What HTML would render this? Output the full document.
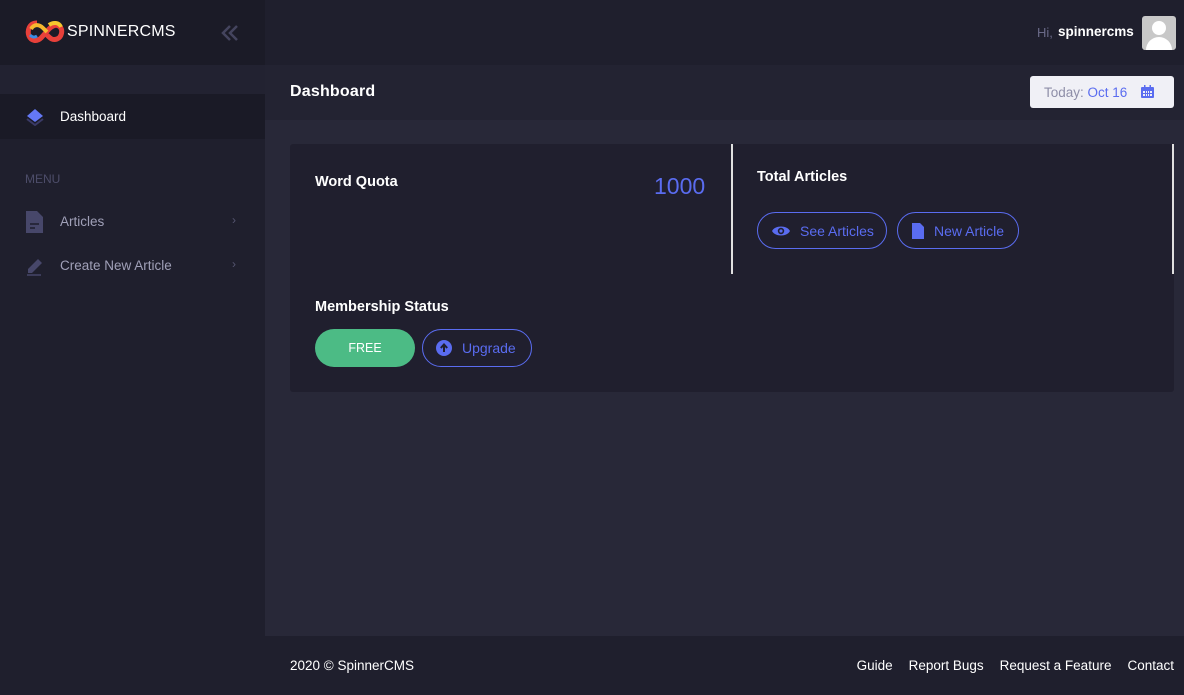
<!DOCTYPE html>
<html><head><meta charset="utf-8"><style>
*{box-sizing:border-box;margin:0;padding:0}
body{width:1184px;height:695px;overflow:hidden;background:#282838;font-family:"Liberation Sans",sans-serif;position:relative}
.sb{position:absolute;left:0;top:0;width:265px;height:695px;background:#1f1f2d}
.logo{position:absolute;left:0;top:0;width:265px;height:65px;background:#1b1b27}
.logo span{position:absolute;left:67px;top:23px;color:#fff;font-size:16px;letter-spacing:.2px}
.sband{position:absolute;left:0;top:65px;width:265px;height:29px;background:#222231}
.act{position:absolute;left:0;top:94px;width:265px;height:45px;background:#1a1a26}
.act span{position:absolute;left:60px;top:15px;color:#fff;font-size:13.5px}
.menu{position:absolute;left:25px;top:172px;color:#4d4d6a;font-size:12px}
.it{position:absolute;left:60px;color:#a0a0b8;font-size:13.5px}
.chev{position:absolute;left:232px;color:#555570;font-size:12px}
.top{position:absolute;left:265px;top:0;width:919px;height:65px;background:#1f1f2d}
.hb{position:absolute;left:265px;top:65px;width:919px;height:55px;background:#232332}
.hb .t{position:absolute;left:25px;top:18px;color:#fff;font-size:16px;font-weight:bold;letter-spacing:.2px}
.date{position:absolute;left:765px;top:11px;width:144px;height:32px;background:#f0f0f6;border-radius:3px;font-size:13.5px;color:#8e8ea8;padding:9px 0 0 14px}
.date b{color:#5a6cf0;font-weight:normal}
.card{position:absolute;left:290px;top:144px;width:884px;height:248px;background:#201f2e;border-radius:3px}
.lbl{position:absolute;color:#fff;font-size:14.5px;font-weight:bold}
.btn{position:absolute;height:37px;border:1px solid #5a6cf0;border-radius:19px;color:#5a6cf0;font-size:14px;display:flex;align-items:center}
.foot{position:absolute;left:265px;top:636px;width:919px;height:59px;background:#1f1f2d;color:#fff;font-size:13.5px}
.foot .r{position:absolute;right:10px;top:22px;display:flex;gap:16px}
</style></head><body>
<div class="sb"></div>
<div class="logo">
<svg style="position:absolute;left:25px;top:19px" width="40" height="26" viewBox="0 0 40 26"><path d="M12 4C4 4 2 12 4 17s8 6 12 2l8-9c4-4 8-5 11-2s2 10-3 12-8-2-10-4" fill="none" stroke="#e8403a" stroke-width="5"/><path d="M6 10c3-5 8-5 12-1l4 4" fill="none" stroke="#f5b82e" stroke-width="4"/><path d="M24 6c4-3 10-3 12 2" fill="none" stroke="#f5c82e" stroke-width="4"/><path d="M5 16c2 2 4 3 7 1" fill="none" stroke="#3a8ee8" stroke-width="3"/></svg>
<span>SPINNERCMS</span>
<svg style="position:absolute;left:221px;top:25px" width="18" height="16" viewBox="0 0 18 16"><path d="M9 1L2 8l7 7M16 1L9 8l7 7" fill="none" stroke="#44445e" stroke-width="2.5"/></svg>
</div>
<div class="sband"></div>
<div class="act">
<svg style="position:absolute;left:26px;top:14px" width="18" height="18" viewBox="0 0 18 18"><path d="M1 11l8 6 8-6" fill="none" stroke="#3a3a66" stroke-width="2"/><path d="M9 1l8 7-8 6-8-6z" fill="#6478f5"/></svg>
<span>Dashboard</span></div>
<div class="menu">MENU</div>
<svg style="position:absolute;left:26px;top:211px" width="18" height="22" viewBox="0 0 18 22"><path d="M0 0h11l6 6v16H0z" fill="#47476a"/><path d="M4 13h9M4 17h5" stroke="#1f1f2d" stroke-width="1.6"/></svg>
<div class="it" style="top:214px">Articles</div><div class="chev" style="top:213px">›</div>
<svg style="position:absolute;left:26px;top:256px" width="18" height="20" viewBox="0 0 18 20"><path d="M2 13L12 3l4 4-10 10H2z" fill="#47476a"/><path d="M1 19h14" stroke="#47476a" stroke-width="1.5"/></svg>
<div class="it" style="top:258px">Create New Article</div><div class="chev" style="top:257px">›</div>
<div class="top">
<span style="position:absolute;left:772px;top:25px;font-size:13px;color:#6a6a88">Hi,</span>
<span style="position:absolute;left:793px;top:24px;font-size:13.5px;color:#fff;font-weight:bold">spinnercms</span>
<div style="position:absolute;left:877px;top:16px;width:34px;height:34px;background:#c8c8c8;border-radius:3px;overflow:hidden"><div style="position:absolute;left:10px;top:5px;width:14px;height:14px;border-radius:50%;background:#fff"></div><div style="position:absolute;left:4px;top:21px;width:26px;height:20px;border-radius:13px 13px 0 0;background:#fff"></div></div>
</div>
<div class="hb"><div class="t">Dashboard</div><div class="date">Today: <b>Oct 16</b>
<svg style="position:absolute;left:111px;top:9px" width="13" height="13" viewBox="0 0 13 13"><rect x="0" y="2" width="13" height="11" rx="1" fill="#5a6cf0"/><rect x="2" y="6" width="9" height="5" fill="#f0f0f6"/><path d="M2 8.5h9M4.5 6v5M6.5 6v5M8.5 6v5" stroke="#5a6cf0"/><rect x="3" y="0" width="1.5" height="3" fill="#5a6cf0"/><rect x="8.5" y="0" width="1.5" height="3" fill="#5a6cf0"/></svg></div></div>
<div class="card">
<div class="lbl" style="left:25px;top:30px">Word Quota</div>
<div style="position:absolute;left:364px;top:29px;color:#5a6cf0;font-size:23px">1000</div>
<div style="position:absolute;left:441px;top:0;width:1.5px;height:130px;background:#e0e0e0"></div>
<div style="position:absolute;left:882px;top:0;width:1.5px;height:130px;background:#e0e0e0"></div>
<div class="lbl" style="left:467px;top:25px">Total Articles</div>
<div class="btn" style="left:467px;top:68px;width:130px"><svg style="margin:0 10px 0 14px" width="18" height="12" viewBox="0 0 18 12"><path d="M0 6C3 0 15 0 18 6 15 12 3 12 0 6z" fill="#5a6cf0"/><circle cx="9" cy="6" r="3.2" fill="#201f2e"/><circle cx="9" cy="6" r="1.6" fill="#5a6cf0"/></svg>See Articles</div>
<div class="btn" style="left:607px;top:68px;width:122px"><svg style="margin:0 10px 0 14px" width="12" height="16" viewBox="0 0 12 16"><path d="M0 0h8l4 4v12H0z" fill="#5a6cf0"/></svg>New Article</div>
<div class="lbl" style="left:25px;top:155px">Membership Status</div>
<div style="position:absolute;left:25px;top:185px;width:100px;height:38px;border-radius:19px;background:#4cbb85;color:#fff;font-size:12.5px;text-align:center;line-height:38px">FREE</div>
<div class="btn" style="left:132px;top:185px;width:110px;height:38px"><svg style="margin:0 10px 0 13px" width="16" height="16" viewBox="0 0 16 16"><circle cx="8" cy="8" r="8" fill="#5a6cf0"/><path d="M8 12V5M4.8 8L8 4.5 11.2 8" stroke="#201f2e" stroke-width="2" fill="none"/></svg>Upgrade</div>
</div>
<div class="foot">
<span style="position:absolute;left:25px;top:22px">2020 © SpinnerCMS</span>
<div class="r"><span>Guide</span><span>Report Bugs</span><span>Request a Feature</span><span>Contact</span></div>
</div>
</body></html>
